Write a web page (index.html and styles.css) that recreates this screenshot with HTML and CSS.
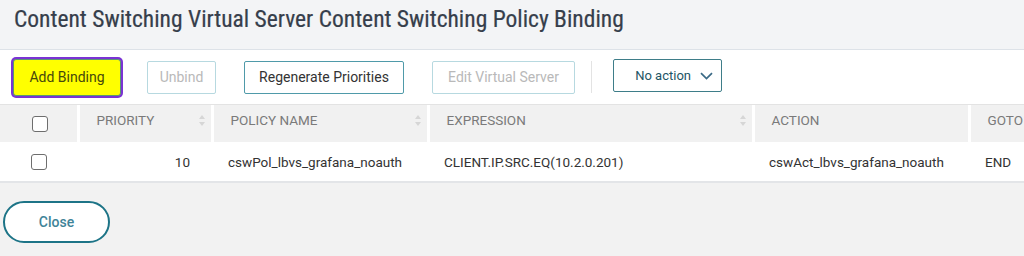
FILE: index.html
```html
<!DOCTYPE html>
<html>
<head>
<meta charset="utf-8">
<link rel="stylesheet" href="styles.css">
</head>
<body>
<div class="page">
  <header class="head">
    <h1 class="title">Content Switching Virtual Server Content Switching Policy Binding</h1>
  </header>
  <div class="toolbar">
    <button class="btn btn-focus">Add Binding</button>
    <button class="btn btn-disabled btn-unbind">Unbind</button>
    <button class="btn btn-regen">Regenerate Priorities</button>
    <button class="btn btn-disabled btn-edit">Edit Virtual Server</button>
    <span class="divider"></span>
    <button class="select">No action
      <svg class="chev" width="13" height="8" viewBox="0 0 13 8"><path d="M1 1.2 L6.5 6.6 L12 1.2" fill="none" stroke="#3b6a86" stroke-width="1.7"/></svg>
    </button>
  </div>
  <div class="tablewrap">
    <table class="grid">
      <colgroup>
        <col class="c-check"><col class="c-prio"><col class="c-name"><col class="c-expr"><col class="c-act"><col class="c-goto">
      </colgroup>
      <thead>
        <tr>
          <th class="th-check"><span class="box"></span></th>
          <th><div class="thin"><span>PRIORITY</span><span class="sort"></span></div></th>
          <th><div class="thin"><span>POLICY NAME</span><span class="sort"></span></div></th>
          <th><div class="thin"><span>EXPRESSION</span><span class="sort"></span></div></th>
          <th><div class="thin"><span>ACTION</span></div></th>
          <th><div class="thin"><span>GOTO</span></div></th>
        </tr>
      </thead>
      <tbody>
        <tr>
          <td class="td-check"><span class="box"></span></td>
          <td class="num">10</td>
          <td>cswPol_lbvs_grafana_noauth</td>
          <td>CLIENT.IP.SRC.EQ(10.2.0.201)</td>
          <td>cswAct_lbvs_grafana_noauth</td>
          <td>END</td>
        </tr>
      </tbody>
    </table>
  </div>
  <footer class="foot">
    <button class="close">Close</button>
  </footer>
</div>
</body>
</html>
```
FILE: styles.css
```css
* { box-sizing: border-box; }
html, body { margin: 0; padding: 0; }
body {
  width: 1024px;
  height: 256px;
  overflow: hidden;
  font-family: Roboto, "Liberation Sans", sans-serif;
  background: #f2f2f2;
  color: #333;
}
.page { display: flex; flex-direction: column; height: 256px; }

.head {
  height: 50px;
  background: #f3f4f6;
  border-bottom: 1px solid #dde2e8;
  padding: 0 14px;
  display: flex;
  align-items: flex-start;
}
.title {
  margin: 5px 0 0;
  font-family: "Roboto Condensed", "Liberation Sans Narrow", "DejaVu Sans Condensed", Roboto, sans-serif;
  font-stretch: condensed;
  font-weight: 400;
  font-size: 23.5px;
  line-height: 28px;
  color: #363e4b;
  -webkit-text-stroke: 0.2px #363e4b;
  white-space: nowrap;
}

.toolbar {
  height: 55px;
  background: #fff;
  border-bottom: 1px solid #e3e3e3;
  display: flex;
  align-items: center;
  padding: 0 0 0 13px;
}
.btn {
  font-family: Roboto, sans-serif;
  font-size: 14px;
  height: 33px;
  background: #fff;
  border: 1px solid #4f9aa9;
  border-radius: 2px;
  color: #333;
  padding: 0;
  margin-right: 28px;
}
.btn-focus {
  width: 108px;
  height: 37px;
  background: #ffff00;
  color: #46480c;
  border: 1px solid #5a9870;
  box-shadow: 0 0 0 2px #7a33d4;
  border-radius: 3px;
  margin-right: 26px;
}
.btn-disabled { border-color: #b7d9e0; color: #b9b9b9; }
.btn-unbind { width: 69px; }
.btn-regen { width: 160px; }
.btn-edit { width: 143px; margin-right: 16px; }
.divider {
  width: 1px;
  height: 32px;
  background: #e3e3e3;
  margin-right: 21px;
  align-self: center;
}
.select {
  width: 109px;
  height: 33px;
  margin-top: -3px;
  background: #fff;
  border: 1px solid #3e7d89;
  border-radius: 2px;
  font-family: Roboto, sans-serif;
  font-size: 13px;
  color: #1d5565;
  display: flex;
  align-items: center;
  justify-content: flex-end;
  gap: 9px;
  padding: 0 8px 0 0;
}
.chev { display: block; margin-top: 1px; }

.tablewrap { background: #fff; overflow: hidden; height: 76px; }
.grid {
  width: 1090px;
  border-collapse: collapse;
  table-layout: fixed;
}
.c-check { width: 78px; }
.c-prio { width: 134px; }
.c-name { width: 216px; }
.c-expr { width: 325px; }
.c-act { width: 216px; }
.c-goto { width: 121px; }
.grid th {
  height: 37px;
  background: #f1f1f1;
  border-right: 3px solid #fff;
  font-weight: 400;
  font-size: 13.5px;
  line-height: 16px;
  color: #7a7a7a;
  text-align: left;
  vertical-align: top;
  padding: 7px 5px 0 17px;
  white-space: nowrap;
}
.thin { display: flex; align-items: center; justify-content: space-between; }
.sort {
  width: 7px;
  height: 11px;
  position: relative;
}
.sort::before, .sort::after {
  content: "";
  position: absolute;
  left: 0;
  border-left: 3.5px solid transparent;
  border-right: 3.5px solid transparent;
}
.sort::before { top: 0; border-bottom: 4px solid #d6d6d6; }
.sort::after { bottom: 0; border-top: 4px solid #d6d6d6; }
.grid th.th-check { padding: 0; text-align: center; vertical-align: middle; }
.grid td.td-check { padding: 0; text-align: center; }
.th-check .box { margin-left: 3px; }
.box {
  display: inline-block;
  width: 16px;
  height: 16px;
  border: 1.5px solid #6e6e6e;
  border-radius: 3px;
  vertical-align: middle;
  background: #fff;
}
.grid td {
  height: 39px;
  font-size: 13.5px;
  color: #333;
  padding: 0 5px 0 16px;
  white-space: nowrap;
  background: #fff;
}
.grid td.num { text-align: right; padding-right: 22px; }

.foot {
  flex: 1;
  background: #f2f2f2;
  border-top: 2px solid #e3e5e8;
  padding: 18px 0 0 3px;
}
.close {
  width: 107px;
  height: 42px;
  border: 2px solid #1d7487;
  border-radius: 21px;
  background: #fff;
  font-family: Roboto, sans-serif;
  font-size: 14px;
  font-weight: 500;
  color: #3f8498;
  padding: 0;
}
```
